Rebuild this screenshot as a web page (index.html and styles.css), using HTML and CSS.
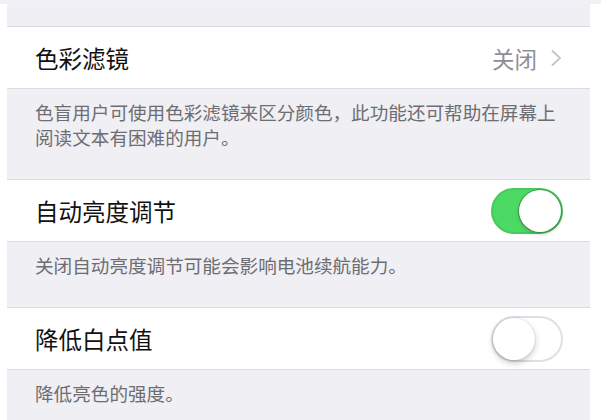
FILE: index.html
```html
<!DOCTYPE html>
<html lang="zh-CN">
<head>
  <meta charset="UTF-8" />
  <meta name="viewport" content="width=device-width, initial-scale=1.0"/>
  <title>辅助功能 - 显示调节</title>
  <link rel="stylesheet" href="styles.css">
</head>
<body>
  <div class="screen">
    <div class="group">
      <div class="cell">
        <span class="label">色彩滤镜</span>
        <span class="detail">关闭
          <svg class="chevron" width="12" height="18" viewBox="0 0 12 18">
            <polyline points="2,1.5 10,9 2,16.5" fill="none" stroke="#c4c4c9" stroke-width="1.8"/>
          </svg>
        </span>
      </div>
      <div class="note">色盲用户可使用色彩滤镜来区分颜色，此功能还可帮助在屏幕上阅读文本有困难的用户。</div>
    </div>

    <div class="group">
      <div class="cell">
        <span class="label">自动亮度调节</span>
        <span class="switch on"><span class="knob"></span></span>
      </div>
      <div class="note">关闭自动亮度调节可能会影响电池续航能力。</div>
    </div>

    <div class="group">
      <div class="cell">
        <span class="label">降低白点值</span>
        <span class="switch"><span class="knob"></span></span>
      </div>
      <div class="note">降低亮色的强度。</div>
    </div>
  </div>
</body>
</html>
```

FILE: styles.css
```css
body {
  margin: 0;
  background: #fff;
  font-family: "Noto Sans CJK SC", "Noto Sans", sans-serif;
  border-top: 4px solid #eef1f6;
}

.screen {
  margin: 0 11px 0 7px;
  padding-top: 22px;
  height: 394px;
  overflow: hidden;
  background: #efeff4;
}

.cell {
  display: flex;
  align-items: center;
  justify-content: space-between;
  height: 61px;
  padding: 0 27px 0 28px;
  background: #fff;
  border-top: 1px solid #dcdce0;
  border-bottom: 1px solid #dcdce0;
}

.label {
  font-size: 23.5px;
  color: #111;
}

.detail {
  display: flex;
  align-items: center;
  gap: 13px;
  margin-right: 1px;
  font-size: 22.5px;
  color: #8e8e93;
}

.chevron {
  margin-top: 1px;
}

.note {
  padding: 10px 28px 30px;
  font-size: 18.6px;
  line-height: 25px;
  color: #6d6d72;
}

.switch {
  position: relative;
  width: 68px;
  height: 42px;
  border-radius: 23px;
  border: 2px solid #e0e0e4;
  background: #fff;
}

.switch.on {
  background: #4cd964;
  border-color: #47c95d;
}

.knob {
  position: absolute;
  top: 0;
  left: 0;
  width: 42px;
  height: 42px;
  border-radius: 50%;
  background: #fff;
  box-shadow: 0 3px 6px rgba(0, 0, 0, 0.22), 0 0 0 1px rgba(0, 0, 0, 0.06);
}

.switch.on .knob {
  left: auto;
  right: 0;
  box-shadow: 0 2px 4px rgba(0, 0, 0, 0.2), 0 0 0 1px #3aa64c;
}
```
